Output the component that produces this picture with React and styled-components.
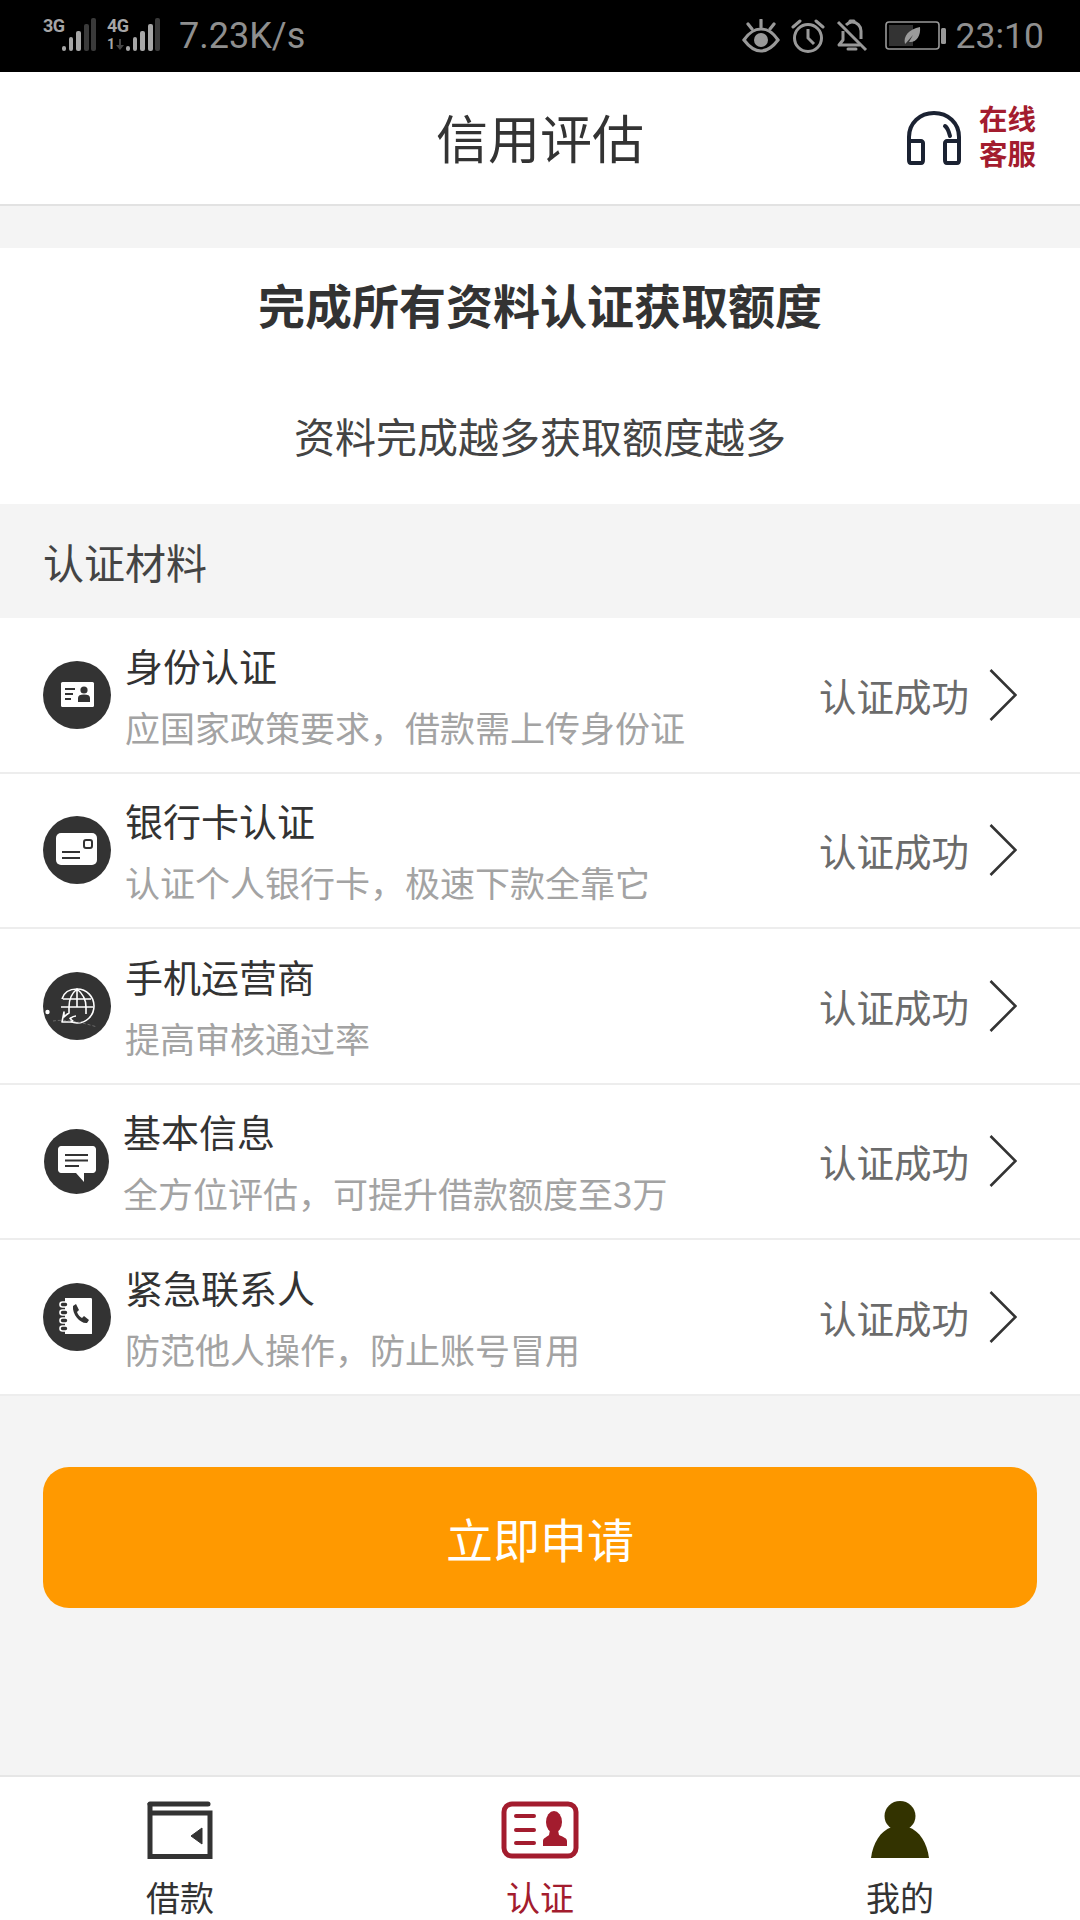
import React from "react";
import styled, { createGlobalStyle } from "styled-components";

const GlobalStyle = createGlobalStyle`
  html, body {
    margin: 0;
    padding: 0;
    background: #f4f4f4;
  }
  body {
    font-family: "Noto Sans CJK SC", "Noto Sans", sans-serif;
  }
  * {
    box-sizing: border-box;
  }
`;

const rows = [
  { id: "idcard", title: "身份认证", desc: "应国家政策要求，借款需上传身份证" },
  { id: "bank", title: "银行卡认证", desc: "认证个人银行卡，极速下款全靠它" },
  { id: "mobile", title: "手机运营商", desc: "提高审核通过率" },
  { id: "info", title: "基本信息", desc: "全方位评估，可提升借款额度至3万", small: true },
  { id: "contact", title: "紧急联系人", desc: "防范他人操作，防止账号冒用" },
];

function Bars({ lit }) {
  const bars = [
    [2, 28, 4, 5],
    [9, 19, 4, 14],
    [16, 13, 5, 20],
    [24, 6, 5, 27],
    [31, 0, 5, 33],
  ];
  return (
    <svg width="36" height="33" viewBox="0 0 36 33">
      {bars.map((b, i) => (
        <rect key={i} x={b[0]} y={b[1]} width={b[2]} height={b[3]} rx="2" fill={i < lit ? "#a6a6a6" : "#3a3a3a"} />
      ))}
    </svg>
  );
}

function EyeIcon() {
  return (
    <svg width="38" height="34" viewBox="0 0 38 34" fill="none" stroke="#999" strokeWidth="3.2">
      <path d="M2 21C8 12 13 10 19 10S30 12 36 21C30 29 25 32 19 32S8 29 2 21Z" />
      <circle cx="19" cy="21" r="7" fill="#999" stroke="none" />
      <path d="M19 1V8M6 5L10 10M32 5L28 10" strokeLinecap="round" />
    </svg>
  );
}

function AlarmIcon() {
  return (
    <svg width="34" height="34" viewBox="0 0 34 34" fill="none" stroke="#999" strokeWidth="3">
      <circle cx="17" cy="19" r="13.5" />
      <path d="M17 10V19L23 25" />
      <path d="M2 8L9 2M32 8L25 2" strokeLinecap="round" />
    </svg>
  );
}

function BellOffIcon() {
  return (
    <svg width="32" height="34" viewBox="0 0 32 34" fill="none" stroke="#999" strokeWidth="3">
      <path d="M7 12V21L3 26H24M10 6C12 4 14 3 16 3C21 3 25 7 25 12V20" strokeLinejoin="round" />
      <path d="M14 2H18" strokeLinecap="round" />
      <path d="M12 30H20" strokeLinecap="round" />
      <path d="M2 3L30 31" />
    </svg>
  );
}

function BatteryIcon() {
  return (
    <svg width="62" height="30" viewBox="0 0 62 30" fill="none">
      <rect x="1" y="1" width="53" height="27" rx="3" stroke="#999" strokeWidth="1.6" />
      <rect x="4" y="4" width="24" height="21" fill="#333" />
      <rect x="56" y="7" width="5" height="16" rx="1.5" fill="#999" />
      <path d="M20 23C18 15 24 8 35 6C36 15 31 22 24 21L28 14L21 22Z" fill="#9a9a9a" />
    </svg>
  );
}

function HeadsetIcon() {
  return (
    <svg width="56" height="54" viewBox="0 0 56 54" fill="none" stroke="#1b2232" strokeWidth="4">
      <path d="M3 36V26C3 12 14 2 28 2S53 12 53 26V36" />
      <path d="M3 30H15C16 30 17 31 17 32V49C17 51 16 52 15 52H5C4 52 3 51 3 49Z" strokeLinejoin="round" />
      <path d="M53 30H41C40 30 39 31 39 32V49C39 51 40 52 41 52H51C52 52 53 51 53 49Z" strokeLinejoin="round" />
      <path d="M39 15C42 17 43 21 44 25" strokeLinecap="round" />
    </svg>
  );
}

function RowIcon({ id }) {
  if (id === "idcard") {
    return (
      <svg viewBox="0 0 68 68" width="100%" height="100%">
        <circle cx="34" cy="34" r="34" fill="#333" />
        <rect x="18" y="21" width="33" height="25" rx="1.5" fill="#fff" />
        <path d="M22 28H32M22 33H30M22 38H28" stroke="#333" strokeWidth="1.8" />
        <circle cx="41" cy="29" r="3.6" fill="#333" />
        <path d="M35 41V37C35 34.5 37 33.5 41 33.5S47 34.5 47 37V41Z" fill="#333" />
      </svg>
    );
  }
  if (id === "bank") {
    return (
      <svg viewBox="0 0 68 68" width="100%" height="100%">
        <circle cx="34" cy="34" r="34" fill="#333" />
        <rect x="13" y="17" width="41" height="32" rx="5" fill="#fff" />
        <rect x="41" y="24" width="8" height="8" rx="2" fill="none" stroke="#333" strokeWidth="2" />
        <path d="M19 36H37M19 42H37" stroke="#333" strokeWidth="2" />
      </svg>
    );
  }
  if (id === "mobile") {
    return (
      <svg viewBox="0 0 68 68" width="100%" height="100%">
        <circle cx="34" cy="34" r="34" fill="#333" />
        <g fill="none" stroke="#fff" strokeWidth="1.6">
          <path d="M19 27C21 20 27 17 34 17C44 17 51 25 51 34C51 44 43 51 34 51C31 51 29 50 27 49" />
          <path d="M20 27H48M18 35H50M34 17V35M26 35C26 27 29 21 34 17C39 21 43 27 43 35V42" />
          <path d="M26 35V41C24 42 23 43 21 45V40L19 50H31L27 46.5C29 45 31 44 33 44" strokeLinejoin="round" />
        </g>
        <circle cx="4.5" cy="40" r="2.2" fill="#fff" />
        <path d="M10 49C22 47 38 50 54 55" fill="none" stroke="#777" strokeWidth="0.8" strokeDasharray="3 2" />
      </svg>
    );
  }
  if (id === "info") {
    return (
      <svg viewBox="0 0 65 65" width="100%" height="100%">
        <circle cx="32.5" cy="32.5" r="32.5" fill="#333" />
        <path d="M17 17H49C50.5 17 52 18.5 52 20V41C52 42.5 50.5 44 49 44H40V53L32 44H17C15.5 44 14 42.5 14 41V20C14 18.5 15.5 17 17 17Z" fill="#fff" />
        <path d="M21 26H44M21 31.5H44M21 37H35" stroke="#333" strokeWidth="2" />
      </svg>
    );
  }
  return (
    <svg viewBox="0 0 68 68" width="100%" height="100%">
      <circle cx="34" cy="34" r="34" fill="#333" />
      <path d="M22 15H48C49 15 49 16 49 17V50C49 51 49 51 48 51H22Z" fill="#fff" />
      <g fill="#333" stroke="#fff" strokeWidth="1.6">
        <rect x="17" y="19" width="8" height="5" rx="2.5" />
        <rect x="17" y="27" width="8" height="5" rx="2.5" />
        <rect x="17" y="35" width="8" height="5" rx="2.5" />
        <rect x="17" y="43" width="8" height="5" rx="2.5" />
      </g>
      <path d="M30 23L33 21L36 27L34 29C35 32 37 34 39 35L41 33L46 37L44 40C38 41 29 32 30 23Z" fill="#333" />
    </svg>
  );
}

function WalletIcon() {
  return (
    <svg width="66" height="58" viewBox="0 0 66 58" fill="none" stroke="#333" strokeWidth="5">
      <path d="M3 3H61" strokeLinecap="round" />
      <path d="M3 2V55.5H63V12H3" />
      <path d="M55 27V43L44 35Z" fill="#333" strokeWidth="1" strokeLinejoin="round" />
    </svg>
  );
}

function CertIcon() {
  return (
    <svg width="78" height="58" viewBox="0 0 78 58" fill="none">
      <rect x="3" y="3" width="72" height="52" rx="8" stroke="#a31c2e" strokeWidth="5" />
      <path d="M15 15H33M15 29H33M15 42H33" stroke="#a31c2e" strokeWidth="4" strokeLinecap="round" />
      <ellipse cx="53" cy="21" rx="8" ry="11" fill="#a31c2e" />
      <path d="M49 29H57L58 34C62 36 66 37 66 40V45H42V40C42 37 46 36 48 34Z" fill="#a31c2e" />
    </svg>
  );
}

function PersonIcon() {
  return (
    <svg width="60" height="58" viewBox="0 0 60 58" fill="#333300">
      <ellipse cx="30" cy="15" rx="15.5" ry="15" />
      <path d="M1 57C3 42 10 30 22 26H38C50 30 57 42 59 57Z" />
    </svg>
  );
}

function Chevron() {
  return (
    <svg width="28" height="52" viewBox="0 0 28 52" fill="none" stroke="#333" strokeWidth="2.6">
      <path d="M1.5 1L26.5 26L1.5 51" />
    </svg>
  );
}

export default function App() {
  return (
    <>
      <GlobalStyle />
      <Page>
        <StatusBar>
          <StatusLeft>
            <Signal>
              <Tech>3G</Tech>
              <Bars lit={3} />
            </Signal>
            <Signal>
              <TechStack>
                <Tech>4G</Tech>
                <Activity>
                  <span>1</span>
                  <svg width="8" height="11" viewBox="0 0 8 11">
                    <path d="M3 0H5V6H8L4 11L0 6H3Z" fill="#444" />
                  </svg>
                </Activity>
              </TechStack>
              <Bars lit={4} />
            </Signal>
            <Speed>7.23K/s</Speed>
          </StatusLeft>
          <StatusRight>
            <EyeIcon />
            <AlarmIcon />
            <BellOffIcon />
            <BatteryWrap>
              <BatteryIcon />
            </BatteryWrap>
            <Clock>23:10</Clock>
          </StatusRight>
        </StatusBar>

        <Header>
          <HeaderTitle>信用评估</HeaderTitle>
          <Service>
            <HeadsetIcon />
            <ServiceText>
              <ServiceLine>在线</ServiceLine>
              <ServiceLine>客服</ServiceLine>
            </ServiceText>
          </Service>
        </Header>

        <Intro>
          <IntroTitle>完成所有资料认证获取额度</IntroTitle>
          <IntroSub>资料完成越多获取额度越多</IntroSub>
        </Intro>

        <SectionLabel>认证材料</SectionLabel>

        <List>
          {rows.map((row) => (
            <Row key={row.id} $small={row.small}>
              <IconWrap $small={row.small}>
                <RowIcon id={row.id} />
              </IconWrap>
              <RowText>
                <RowTitle>{row.title}</RowTitle>
                <RowDesc>{row.desc}</RowDesc>
              </RowText>
              <RowStatus>认证成功</RowStatus>
              <Chevron />
            </Row>
          ))}
        </List>

        <Main>
          <ApplyButton>立即申请</ApplyButton>
        </Main>

        <TabBar>
          <Tab>
            <TabIcon><WalletIcon /></TabIcon>
            <TabLabel>借款</TabLabel>
          </Tab>
          <Tab>
            <TabIcon><CertIcon /></TabIcon>
            <TabLabel $active>认证</TabLabel>
          </Tab>
          <Tab>
            <TabIcon><PersonIcon /></TabIcon>
            <TabLabel>我的</TabLabel>
          </Tab>
        </TabBar>
      </Page>
    </>
  );
}

const Page = styled.div`
  width: 1080px;
  height: 1920px;
  display: flex;
  flex-direction: column;
  overflow: hidden;
  background: #f4f4f4;
`;

const StatusBar = styled.div`
  height: 72px;
  flex: none;
  background: #000;
  display: flex;
  align-items: center;
  justify-content: space-between;
  padding: 0 36px 0 43px;
`;

const StatusLeft = styled.div`
  display: flex;
  align-items: center;
`;

const StatusRight = styled.div`
  display: flex;
  align-items: center;
  gap: 11px;
`;

const BatteryWrap = styled.div`
  display: flex;
  margin-left: 6px;
`;

const Signal = styled.div`
  display: flex;
  align-items: flex-start;
  height: 34px;
  margin-right: 11px;
  margin-top: -2px;
`;

const TechStack = styled.div`
  display: flex;
  flex-direction: column;
`;

const Tech = styled.span`
  font-family: "Liberation Sans Narrow", "Roboto", sans-serif;
  font-weight: 700;
  font-size: 18px;
  line-height: 15px;
  width: 17px;
  color: #a6a6a6;
  letter-spacing: -0.5px;
`;

const Activity = styled.div`
  display: flex;
  align-items: center;
  gap: 1px;
  margin-top: 5px;
  height: 12px;

  span {
    font-family: "Roboto", sans-serif;
    font-weight: 700;
    font-size: 14px;
    line-height: 12px;
    color: #a6a6a6;
  }
`;

const Speed = styled.span`
  font-family: "Roboto", sans-serif;
  font-size: 36px;
  line-height: 40px;
  color: #8f8f8f;
  margin-left: 8px;
`;

const Clock = styled.span`
  font-family: "Roboto", sans-serif;
  font-size: 35.5px;
  line-height: 40px;
  color: #8f8f8f;
  margin-left: -2px;
`;

const Header = styled.div`
  height: 134px;
  flex: none;
  background: #fff;
  border-bottom: 2px solid #e2e2e2;
  display: flex;
  align-items: center;
  justify-content: center;
  position: relative;
`;

const HeaderTitle = styled.div`
  font-size: 52px;
  line-height: 60px;
  margin-top: -2px;
  color: #333;
`;

const Service = styled.div`
  position: absolute;
  right: 44px;
  top: 33px;
  display: flex;
  align-items: center;
  gap: 17px;
`;

const ServiceText = styled.div`
  display: flex;
  flex-direction: column;
  margin-top: -5px;
`;

const ServiceLine = styled.div`
  height: 35px;
  font-size: 28.5px;
  line-height: 35px;
  font-weight: 700;
  color: #a31c2e;
`;

const Intro = styled.div`
  margin-top: 42px;
  height: 256px;
  flex: none;
  background: #fff;
  display: flex;
  flex-direction: column;
  align-items: center;
`;

const IntroTitle = styled.div`
  margin-top: 26px;
  font-size: 47px;
  line-height: 60px;
  font-weight: 700;
  color: #333;
`;

const IntroSub = styled.div`
  margin-top: 71px;
  font-size: 41px;
  line-height: 60px;
  color: #444;
`;

const SectionLabel = styled.div`
  height: 114px;
  flex: none;
  display: flex;
  align-items: center;
  padding-left: 43px;
  font-size: 41px;
  color: #444;
`;

const List = styled.div`
  flex: none;
  background: #fff;
`;

const Row = styled.div`
  height: 155.5px;
  display: flex;
  align-items: center;
  padding: 0 63px 0 ${(p) => (p.$small ? "44px" : "43px")};
  border-bottom: 2px solid #ededed;
`;

const IconWrap = styled.div`
  flex: none;
  width: ${(p) => (p.$small ? "65px" : "68px")};
  height: ${(p) => (p.$small ? "65px" : "68px")};
  margin-right: 14px;
`;

const RowText = styled.div`
  flex: 1;
  display: flex;
  flex-direction: column;
  gap: 18px;
  padding-top: 2px;
`;

const RowTitle = styled.div`
  font-size: 38px;
  line-height: 44px;
  color: #333;
`;

const RowDesc = styled.div`
  font-size: 35px;
  line-height: 44px;
  color: #a3a3a3;
`;

const RowStatus = styled.div`
  font-size: 37.5px;
  line-height: 44px;
  color: #6b6b6b;
  margin-right: 20px;
`;

const Main = styled.div`
  flex: 1;
  padding: 71px 43px 0;
`;

const ApplyButton = styled.button`
  display: block;
  width: 100%;
  height: 141px;
  border: none;
  border-radius: 26px;
  background: #ff9900;
  color: #fff;
  font-family: inherit;
  font-size: 47px;
`;

const TabBar = styled.div`
  height: 145px;
  flex: none;
  background: #fff;
  border-top: 2px solid #e6e6e6;
  display: grid;
  grid-template-columns: repeat(3, 1fr);
`;

const Tab = styled.div`
  display: flex;
  flex-direction: column;
  align-items: center;
  padding-top: 24px;
`;

const TabIcon = styled.div`
  height: 58px;
  display: flex;
  align-items: center;
  justify-content: center;
`;

const TabLabel = styled.div`
  margin-top: 18px;
  font-size: 34px;
  line-height: 40px;
  color: ${(p) => (p.$active ? "#a31c2e" : "#333")};
`;
